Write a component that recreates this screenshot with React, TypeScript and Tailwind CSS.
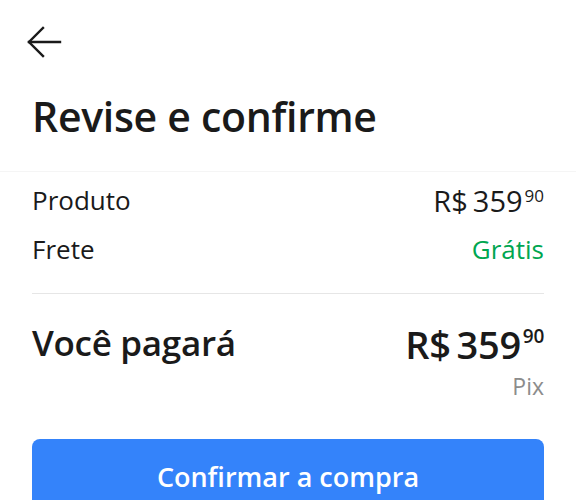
function BackArrow() {
  return (
    <svg width="35" height="32" viewBox="0 0 35 32" fill="none" stroke="#1a1a1a" strokeWidth="2.4" strokeLinecap="square">
      <polyline points="16,2 2,16 16,30" />
      <line x1="2" y1="16" x2="33" y2="16" />
    </svg>
  )
}

function Price({ big }: { big?: boolean }) {
  if (big) {
    return (
      <span className="flex items-start font-semibold text-[38px] leading-none tracking-[-0.3px]">
        <span>R$</span>
        <span className="ml-[6px]">359</span>
        <span className="ml-[2px] text-[19px] leading-none mt-[2px]">90</span>
      </span>
    )
  }
  return (
    <span className="flex items-start text-[29px] leading-none">
      <span>R$</span>
      <span className="ml-[5px]">359</span>
      <span className="ml-[2px] text-[17px] leading-none mt-[1px]">90</span>
    </span>
  )
}

export default function App() {
  return (
    <div className="w-[576px] h-[500px] overflow-hidden bg-white font-['Open_Sans',sans-serif] text-[#1a1a1a]">
      <div className="px-8 pt-[26px] pb-[34px] border-b border-[#f5f5f5]">
        <div className="-ml-[5px]">
          <BackArrow />
        </div>
        <h1 className="mt-[38px] text-[41px] leading-none font-semibold tracking-[-0.3px]">Revise e confirme</h1>
      </div>

      <div className="px-8">
        <div className="flex justify-between items-center mt-[13px] h-[30px]">
          <span className="text-[26px] leading-none">Produto</span>
          <Price />
        </div>
        <div className="flex justify-between items-center mt-[19px] h-[30px]">
          <span className="text-[26px] leading-none">Frete</span>
          <span className="text-[26px] leading-none text-[#00a650]">Grátis</span>
        </div>
        <div className="mt-[29px] border-t border-[#e6e6e6]" />

        <div className="flex justify-between items-start mt-[31px]">
          <span className="text-[35px] leading-none font-semibold tracking-[-0.3px]">Você pagará</span>
          <Price big />
        </div>
        <div className="flex justify-end mt-[12px]">
          <span className="text-[23px] leading-none text-[#8c8c8c]">Pix</span>
        </div>

        <button className="mt-[41px] w-full h-[76px] rounded-lg bg-[#3483fa] text-white text-[27px] font-semibold">
          Confirmar a compra
        </button>
      </div>
    </div>
  )
}
